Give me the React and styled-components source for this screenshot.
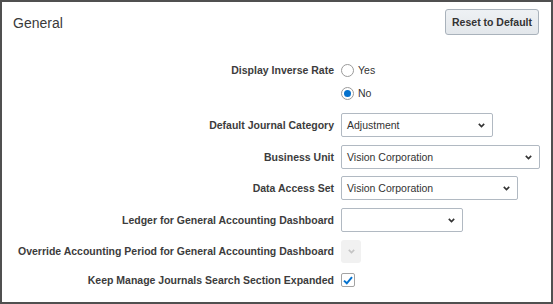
import React from 'react';
import styled, { createGlobalStyle } from 'styled-components';

const GlobalStyle = createGlobalStyle`
  html, body {
    margin: 0;
    padding: 0;
    background: #ffffff;
  }

  body {
    font-family: "Liberation Sans", Arial, sans-serif;
    color: #333333;
  }
`;

const Panel = styled.div`
  width: 553px;
  height: 304px;
  box-sizing: border-box;
  border: 2px solid #505050;
  background-color: #ffffff;
  padding: 7px 12px 0 11px;
  display: flex;
  flex-direction: column;
`;

const Header = styled.div`
  display: flex;
  justify-content: space-between;
  align-items: flex-start;
`;

const Title = styled.h2`
  margin: 0;
  padding-top: 6px;
  font-size: 14px;
  line-height: 16px;
  font-weight: normal;
  color: #3a3a3a;
`;

const ResetButton = styled.button`
  width: 94px;
  height: 26px;
  box-sizing: border-box;
  padding: 0;
  border: 1px solid #a9b2bb;
  border-radius: 3px;
  background: linear-gradient(#eef1f4, #e3e7eb);
  font-family: inherit;
  font-size: 10.5px;
  font-weight: bold;
  color: #333333;
`;

const Form = styled.div`
  margin-top: 27px;
  display: flex;
  flex-direction: column;
  gap: 8px;
`;

const Field = styled.div`
  display: grid;
  grid-template-columns: 321px 1fr;
  column-gap: 7px;
  align-items: center;
  height: ${props => props.$h || 24}px;
  margin-top: ${props => props.$mt || 0}px;
`;

const Label = styled.label`
  text-align: right;
  font-size: 10.5px;
  font-weight: bold;
  color: #3c3c3c;
  white-space: nowrap;
`;

const Control = styled.div`
  display: flex;
  align-items: center;
`;

const RadioOption = styled.div`
  display: flex;
  align-items: center;
  gap: 4px;
  font-size: 10.5px;
  color: #333333;
`;

const RadioCircle = styled.span`
  width: 13px;
  height: 13px;
  box-sizing: border-box;
  border-radius: 50%;
  border: 1px solid #9a9a9a;
  background: #ffffff;
  display: flex;
  align-items: center;
  justify-content: center;

  &::after {
    content: '';
    width: 7px;
    height: 7px;
    border-radius: 50%;
    background: ${props => (props.$checked ? '#0572ce' : 'transparent')};
  }
`;

const SelectBox = styled.div`
  width: ${props => props.$w}px;
  height: 24px;
  box-sizing: border-box;
  border: 1px solid #b1b9c2;
  border-radius: 2px;
  background: #ffffff;
  display: flex;
  align-items: center;
  justify-content: space-between;
  padding: 0 7px 0 5px;
  font-size: 10.5px;
  color: #333333;
`;

const DisabledSelect = styled.div`
  width: 20px;
  height: 23px;
  border-radius: 3px;
  background: #f1f1f1;
  display: flex;
  align-items: center;
  justify-content: center;
`;

const CheckBox = styled.span`
  width: 14px;
  height: 14px;
  box-sizing: border-box;
  border: 1px solid #a3a3a3;
  border-radius: 2px;
  background: #ffffff;
  display: flex;
  align-items: center;
  justify-content: center;
`;

function Chevron({ color = '#333333' }) {
  return (
    <svg width="7" height="5" viewBox="0 0 7 5">
      <path d="M0.8 0.9 L3.5 3.6 L6.2 0.9" fill="none" stroke={color} strokeWidth="1.6" />
    </svg>
  );
}

function Select({ width, value }) {
  return (
    <SelectBox $w={width}>
      <span>{value}</span>
      <Chevron />
    </SelectBox>
  );
}

function App() {
  return (
    <>
      <GlobalStyle />
      <Panel>
        <Header>
          <Title>General</Title>
          <ResetButton>Reset to Default</ResetButton>
        </Header>
        <Form>
          <Field $h={16}>
            <Label>Display Inverse Rate</Label>
            <Control>
              <RadioOption><RadioCircle />Yes</RadioOption>
            </Control>
          </Field>
          <Field $h={16} $mt={-1}>
            <span />
            <Control>
              <RadioOption><RadioCircle $checked />No</RadioOption>
            </Control>
          </Field>
          <Field $mt={4}>
            <Label>Default Journal Category</Label>
            <Control><Select width={152} value="Adjustment" /></Control>
          </Field>
          <Field>
            <Label>Business Unit</Label>
            <Control><Select width={199} value="Vision Corporation" /></Control>
          </Field>
          <Field $mt={-1}>
            <Label>Data Access Set</Label>
            <Control><Select width={177} value="Vision Corporation" /></Control>
          </Field>
          <Field>
            <Label>Ledger for General Accounting Dashboard</Label>
            <Control><Select width={122} value="" /></Control>
          </Field>
          <Field $mt={-1}>
            <Label>Override Accounting Period for General Accounting Dashboard</Label>
            <Control>
              <DisabledSelect><Chevron color="#c4c4c4" /></DisabledSelect>
            </Control>
          </Field>
          <Field $h={16} $mt={1}>
            <Label>Keep Manage Journals Search Section Expanded</Label>
            <Control>
              <CheckBox>
                <svg width="10" height="9" viewBox="0 0 10 9">
                  <path d="M1 4.6 L3.8 7.3 L9 1.2" fill="none" stroke="#0572ce" strokeWidth="2" />
                </svg>
              </CheckBox>
            </Control>
          </Field>
        </Form>
      </Panel>
    </>
  );
}

export default App;
